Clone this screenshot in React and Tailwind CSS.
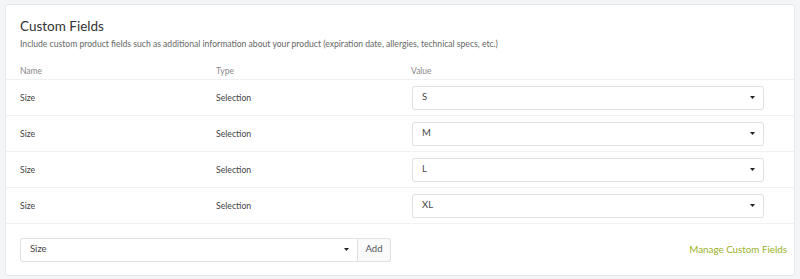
import React from 'react';

const rows = [
  { name: 'Size', type: 'Selection', value: 'S' },
  { name: 'Size', type: 'Selection', value: 'M' },
  { name: 'Size', type: 'Selection', value: 'L' },
  { name: 'Size', type: 'Selection', value: 'XL' },
];

const Caret = () => (
  <svg width="5" height="3" viewBox="0 0 5 3" className="shrink-0">
    <path d="M0 0h5L2.5 3z" fill="#222" />
  </svg>
);

const App = () => {
  return (
    <div className="min-h-[279px] bg-[#f4f5f7] px-[5px] pt-[4px] pb-[3px]" style={{ fontFamily: 'Lato, "Open Sans", sans-serif' }}>
      <div className="bg-white border border-[#e6e8eb] rounded-[3px] h-[272px] flex flex-col">
        <div className="px-[14px] pt-[13px]">
          <h2 className="text-[13.5px] leading-[16px] text-[#333]">Custom Fields</h2>
          <p className="mt-[4px] text-[8.6px] leading-[12px] text-[#666]">
            Include custom product fields such as additional information about your product (expiration date, allergies, technical specs, etc.)
          </p>
        </div>

        <div className="mt-[14px] flex items-center h-[16px] border-b border-[#f0f1f2] text-[8.5px] text-[#888]">
          <div className="pl-[14px] w-[210px]">Name</div>
          <div className="w-[195px]">Type</div>
          <div>Value</div>
        </div>

        {rows.map((row, i) => (
          <div key={i} className="flex items-center h-[36px] border-b border-[#f0f1f2] text-[8.7px] text-[#444]">
            <div className="pl-[14px] w-[210px]">{row.name}</div>
            <div className="w-[195px]">{row.type}</div>
            <div className="w-[352px] ml-[1px] h-[24px] border border-[#dfe1e4] rounded-[3px] flex items-center justify-between pl-[9px] pr-[8px] text-[9.5px] text-[#444]">
              <span>{row.value}</span>
              <Caret />
            </div>
          </div>
        ))}

        <div className="flex-1 flex items-center justify-between pl-[14px] pr-[7px]">
          <div className="flex h-[24px]">
            <div className="w-[338px] border border-[#dfe1e4] rounded-l-[3px] flex items-center justify-between pl-[9px] pr-[8px] text-[9.5px] text-[#444]">
              <span>Size</span>
              <Caret />
            </div>
            <button className="w-[33px] border border-l-0 border-[#dfe1e4] rounded-r-[3px] bg-[#fafafa] text-[9.5px] text-[#555]">Add</button>
          </div>
          <a href="#" className="text-[9.8px] text-[#9ab22a]">Manage Custom Fields</a>
        </div>
      </div>
    </div>
  );
};

export default App;
